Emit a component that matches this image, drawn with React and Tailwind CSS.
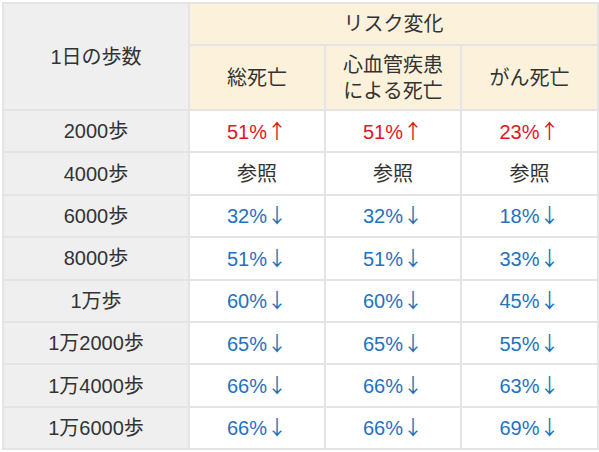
const rows = [
  { steps: "2000歩", all: "51%", cvd: "51%", cancer: "23%", tone: "up" },
  { steps: "4000歩", all: "参照", cvd: "参照", cancer: "参照", tone: "ref" },
  { steps: "6000歩", all: "32%", cvd: "32%", cancer: "18%", tone: "down" },
  { steps: "8000歩", all: "51%", cvd: "51%", cancer: "33%", tone: "down" },
  { steps: "1万歩", all: "60%", cvd: "60%", cancer: "45%", tone: "down" },
  { steps: "1万2000歩", all: "65%", cvd: "65%", cancer: "55%", tone: "down" },
  { steps: "1万4000歩", all: "66%", cvd: "66%", cancer: "63%", tone: "down" },
  { steps: "1万6000歩", all: "66%", cvd: "66%", cancer: "69%", tone: "down" },
];

const toneClass = {
  up: "text-[#e5141c]",
  ref: "text-[#333333]",
  down: "text-[#1e73be]",
};

const arrows = { up: "↑", down: "↓", ref: "" };

const cell = "border-2 border-[#e4e4e4] text-center align-middle font-normal";

const Value = ({ text, tone }) => (
  <span className={toneClass[tone]}>
    {text}
    {arrows[tone] && (
      <span className="font-['Noto_Sans_CJK_JP',sans-serif]">{arrows[tone]}</span>
    )}
  </span>
);

export default function App() {
  return (
    <div className="bg-white w-[599px] h-[452px] p-[2px] font-['Liberation_Sans','Noto_Sans_CJK_JP',sans-serif] text-[20px] text-[#333333]">
      <table className="border-collapse table-fixed w-[595px]">
        <colgroup>
          <col className="w-[186px]" />
          <col className="w-[136px]" />
          <col className="w-[136px]" />
          <col className="w-[137px]" />
        </colgroup>
        <thead>
          <tr className="h-[42px]">
            <th rowSpan={2} className={`${cell} bg-[#efefef]`}>
              1日の歩数
            </th>
            <th colSpan={3} className={`${cell} bg-[#fcf2dc]`}>
              リスク変化
            </th>
          </tr>
          <tr className="h-[65px]">
            <th className={`${cell} bg-[#fcf2dc]`}>総死亡</th>
            <th className={`${cell} bg-[#fcf2dc] leading-[26px]`}>
              心血管疾患
              <br />
              による死亡
            </th>
            <th className={`${cell} bg-[#fcf2dc]`}>がん死亡</th>
          </tr>
        </thead>
        <tbody>
          {rows.map((r) => (
            <tr key={r.steps} className="h-[42.4px]">
              <td className={`${cell} bg-[#efefef]`}>{r.steps}</td>
              <td className={`${cell} bg-white`}>
                <Value text={r.all} tone={r.tone} />
              </td>
              <td className={`${cell} bg-white`}>
                <Value text={r.cvd} tone={r.tone} />
              </td>
              <td className={`${cell} bg-white`}>
                <Value text={r.cancer} tone={r.tone} />
              </td>
            </tr>
          ))}
        </tbody>
      </table>
    </div>
  );
}
